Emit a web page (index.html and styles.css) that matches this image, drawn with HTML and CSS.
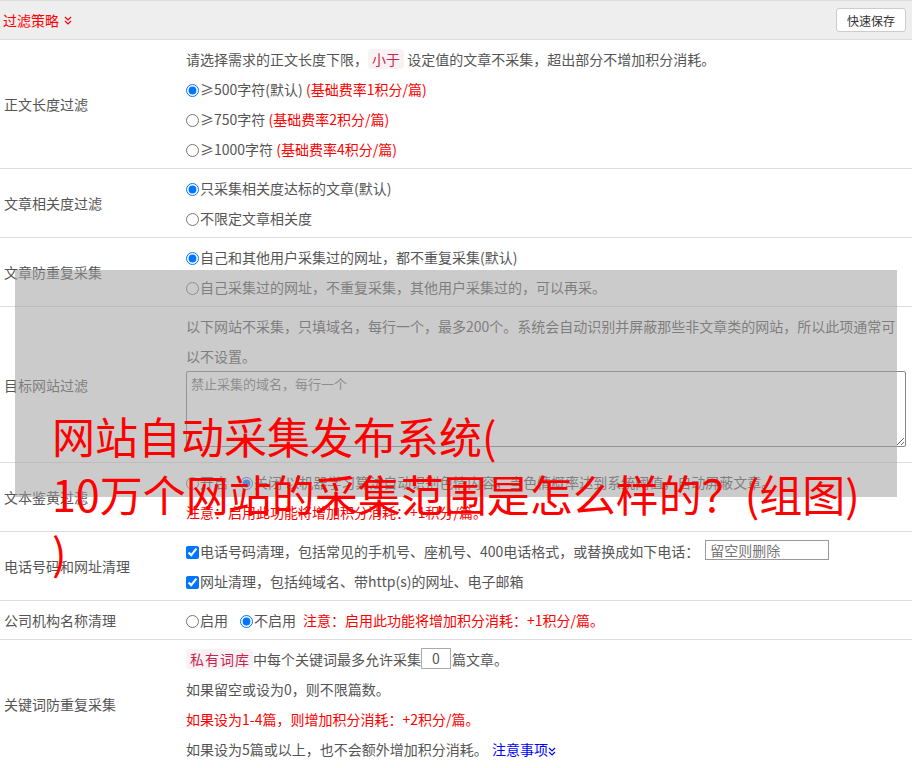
FILE: index.html
```html
<!DOCTYPE html>
<html lang="zh-CN">
<head>
<meta charset="UTF-8">
<meta name="viewport" content="width=device-width, initial-scale=1.0">
<title>过滤策略</title>
<link rel="stylesheet" href="styles.css">
</head>
<body>
<div class="panel">
    <div class="panel-head">
        <div class="panel-title">过滤策略
            <svg class="chev" width="8" height="9" viewBox="0 0 8 9"><path d="M1 1 L4 4 L7 1 M1 5 L4 8 L7 5" fill="none" stroke="#f00" stroke-width="1.2"/></svg>
        </div>
        <button class="save-btn">快速保存</button>
    </div>

    <div class="row">
        <div class="row-label">正文长度过滤</div>
        <div class="row-body">
            <div>请选择需求的正文长度下限，<span class="tag">小于</span> 设定值的文章不采集，超出部分不增加积分消耗。</div>
            <div><label><input type="radio" name="len" checked>≥500字符(默认)</label> <span class="red">(基础费率1积分/篇)</span></div>
            <div><label><input type="radio" name="len">≥750字符</label> <span class="red">(基础费率2积分/篇)</span></div>
            <div><label><input type="radio" name="len">≥1000字符</label> <span class="red">(基础费率4积分/篇)</span></div>
        </div>
    </div>

    <div class="row">
        <div class="row-label">文章相关度过滤</div>
        <div class="row-body">
            <div><label><input type="radio" name="rel" checked>只采集相关度达标的文章(默认)</label></div>
            <div><label><input type="radio" name="rel">不限定文章相关度</label></div>
        </div>
    </div>

    <div class="row">
        <div class="row-label">文章防重复采集</div>
        <div class="row-body">
            <div><label><input type="radio" name="dup" checked>自己和其他用户采集过的网址，都不重复采集(默认)</label></div>
            <div><label><input type="radio" name="dup">自己采集过的网址，不重复采集，其他用户采集过的，可以再采。</label></div>
        </div>
    </div>

    <div class="row row-tall">
        <div class="row-label">目标网站过滤</div>
        <div class="row-body">
            <div>以下网站不采集，只填域名，每行一个，最多200个。系统会自动识别并屏蔽那些非文章类的网站，所以此项通常可以不设置。</div>
            <textarea class="domains" placeholder="禁止采集的域名，每行一个"></textarea>
        </div>
    </div>

    <div class="row">
        <div class="row-label">文本鉴黄过滤</div>
        <div class="row-body">
            <div><label class="opt"><input type="radio" name="porn">开启</label><label><input type="radio" name="porn" checked>关闭</label> 以机器学习算法自动识别色情内容，当色情概率达到系统阈值，自动屏蔽文章。</div>
            <div class="red">注意：启用此功能将增加积分消耗：+1积分/篇。</div>
        </div>
    </div>

    <div class="row">
        <div class="row-label">电话号码和网址清理</div>
        <div class="row-body">
            <div><label><input type="checkbox" checked>电话号码清理，包括常见的手机号、座机号、400电话格式，或替换成如下电话：</label><input class="phone" type="text" placeholder="留空则删除"></div>
            <div><label><input type="checkbox" checked>网址清理，包括纯域名、带http(s)的网址、电子邮箱</label></div>
        </div>
    </div>

    <div class="row">
        <div class="row-label">公司机构名称清理</div>
        <div class="row-body">
            <div><label class="opt"><input type="radio" name="org">启用</label><label class="opt opt-last"><input type="radio" name="org" checked>不启用</label><span class="red">注意：启用此功能将增加积分消耗：+1积分/篇。</span></div>
        </div>
    </div>

    <div class="row">
        <div class="row-label">关键词防重复采集</div>
        <div class="row-body">
            <div><span class="tag tag-wide">私有词库</span>中每个关键词最多允许采集<input class="count" type="text" value="0">篇文章。</div>
            <div>如果留空或设为0，则不限篇数。</div>
            <div class="red">如果设为1-4篇，则增加积分消耗：+2积分/篇。</div>
            <div>如果设为5篇或以上，也不会额外增加积分消耗。 <a class="note-link" href="#">注意事项<svg class="chev" width="8" height="9" viewBox="0 0 8 9"><path d="M1 1 L4 4 L7 1 M1 5 L4 8 L7 5" fill="none" stroke="#00f" stroke-width="1.2"/></svg></a></div>
        </div>
    </div>
</div>

<div class="cover"></div>
<div class="caption">网站自动采集发布系统(<br>10万个网站的采集范围是怎么样的？(组图)<br>)</div>
</body>
</html>
```

FILE: styles.css
```css
body {
    margin: 0;
    font-family: "Noto Sans CJK SC", sans-serif;
    font-size: 14px;
    color: #555;
    background: #fff;
}

.panel {
    border-top: 1px solid #ddd;
}

.panel-head {
    display: flex;
    justify-content: space-between;
    align-items: center;
    height: 38px;
    padding: 0 6px 0 3px;
    background-color: #eee;
    border-bottom: 1px solid #ddd;
}

.panel-title {
    color: #f00;
    display: flex;
    align-items: center;
    gap: 5px;
}

.save-btn {
    height: 24px;
    padding: 0 10px;
    font-family: inherit;
    font-size: 12px;
    color: #333;
    background: #fff;
    border: 1px solid #ccc;
    border-radius: 3px;
}

.row {
    display: grid;
    grid-template-columns: 182px 1fr;
    border-bottom: 1px solid #ddd;
}

.row-label {
    display: flex;
    align-items: center;
    padding: 0 4px;
}

.row-body {
    padding: 4px 6px 4px 4px;
    line-height: 30px;
}

.row-tall .row-body {
    padding-bottom: 5px;
}

.red {
    color: #f00;
}

.tag {
    display: inline-block;
    line-height: 20px;
    padding: 0 4px;
    color: #c7254e;
    background-color: #f9f2f4;
    border-radius: 4px;
}

.tag-wide {
    letter-spacing: 1px;
    padding: 0 3px 0 4px;
}

input[type="radio"],
input[type="checkbox"] {
    width: 13px;
    height: 13px;
    margin: 0 1px 0 0;
    vertical-align: -2px;
}

.opt {
    margin-right: 12px;
}

.opt-last {
    margin-right: 7px;
}

.domains {
    display: block;
    box-sizing: border-box;
    width: 100%;
    height: 76px;
    margin: 0 0 10px;
    padding: 2px 4px;
    font-family: inherit;
    font-size: 13px;
    color: #555;
    border: 1px solid #888;
    border-radius: 2px;
}

.phone {
    box-sizing: border-box;
    width: 124px;
    height: 20px;
    margin-left: 6px;
    padding: 0 4px;
    font-family: inherit;
    font-size: 14px;
    border: 1px solid #999;
    vertical-align: 1px;
}

.count {
    box-sizing: border-box;
    width: 30px;
    height: 21px;
    margin: 0 1px 0 0;
    padding: 0;
    font-family: inherit;
    font-size: 14px;
    color: #555;
    text-align: center;
    border: 1px solid #aaa;
    vertical-align: 1px;
}

.note-link {
    margin-left: 1px;
    color: #00f;
    text-decoration: none;
}

.note-link .chev {
    vertical-align: -1px;
}

.cover {
    position: absolute;
    left: 15px;
    top: 270px;
    width: 882px;
    height: 227px;
    background-color: rgba(160, 160, 160, 0.55);
}

.caption {
    position: absolute;
    left: 52px;
    top: 406px;
    font-size: 43px;
    line-height: 58px;
    color: #f00;
}
```
